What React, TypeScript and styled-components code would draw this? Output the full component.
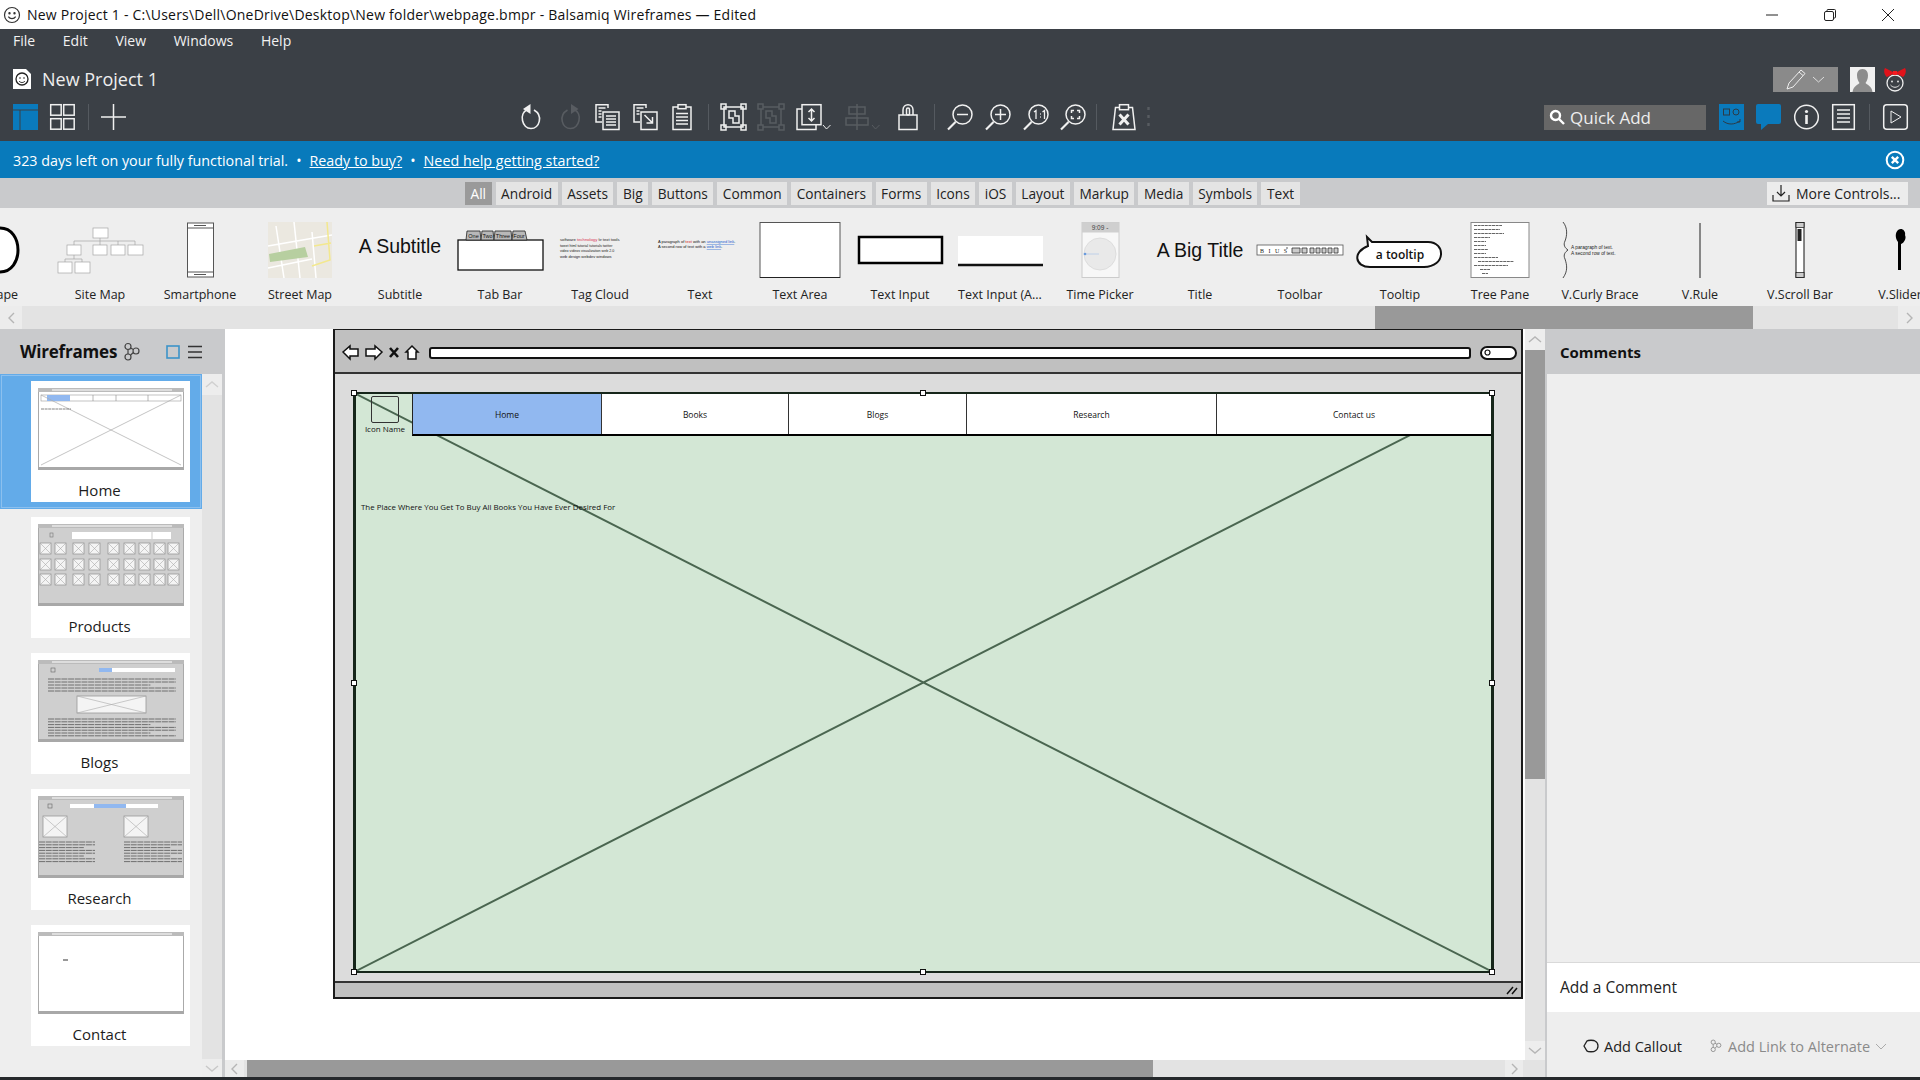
import React from 'react';
import styled, { createGlobalStyle } from 'styled-components';

const GlobalStyle = createGlobalStyle`
  html, body { margin: 0; padding: 0; width: 1920px; height: 1080px; overflow: hidden; background: #fff; }
  * { box-sizing: border-box; }
  body { font-family: "Open Sans", "Noto Sans", sans-serif; color: #1c1c1c; }
`;

const Page = styled.div`
  width: 1920px;
  height: 1080px;
  display: flex;
  flex-direction: column;
  overflow: hidden;
`;

const TitleBar = styled.div`
  height: 29px;
  display: flex;
  align-items: center;
  padding-left: 3px;
  font-size: 14px;
  color: #111;
  background: #fff;
`;
const TitleText = styled.span`
  margin-left: 6px;
  letter-spacing: 0.22px;
`;
const WindowButtons = styled.div`
  margin-left: auto;
  display: flex;
  align-items: center;
`;
const WinButton = styled.svg`
  width: 14px;
  height: 14px;
  margin-right: 44px;
  &:last-child { margin-right: 25px; }
`;

const Header = styled.div`
  height: 112px;
  background: #3b4046;
  color: #fff;
  display: flex;
  flex-direction: column;
`;
const MenuRow = styled.div`
  height: 24px;
  display: flex;
  align-items: center;
  padding: 0 0 2px 13px;
  gap: 27.7px;
  font-size: 14px;
  color: #f2f2f2;
`;
const ProjectRow = styled.div`
  height: 51px;
  display: flex;
  align-items: center;
  padding: 1px 13px 0;
`;
const ProjectName = styled.span`
  margin-left: 11px;
  font-size: 18px;
  color: #eee;
`;
const ModeButton = styled.div`
  width: 65px;
  height: 25px;
  margin-left: auto;
  background: #8a8a8a;
  display: flex;
  align-items: center;
  justify-content: center;
  gap: 6px;
`;
const ToolRow = styled.div`
  height: 26px;
  display: flex;
  align-items: center;
  padding-left: 13px;
`;
const Tool = styled.svg<{ $ml: number; $w: number; $dim?: boolean }>`
  flex: none;
  width: ${({ $w }) => $w}px;
  height: 26px;
  margin-left: ${({ $ml }) => $ml}px;
  fill: none;
  stroke: ${({ $dim }) => ($dim ? '#585c61' : '#f0f0f0')};
  stroke-width: 1.5;
  overflow: visible;
`;
const Divider = styled.div<{ $ml: number }>`
  flex: none;
  width: 1px;
  height: 26px;
  margin-left: ${({ $ml }) => $ml}px;
  background: #555a60;
`;
const QuickAdd = styled.div`
  flex: none;
  width: 162px;
  height: 25px;
  margin-left: 394px;
  padding-left: 5px;
  display: flex;
  align-items: center;
  gap: 5px;
  background: #676767;
  font-size: 17px;
  color: #eee;
`;

const Banner = styled.div`
  height: 37px;
  display: flex;
  align-items: center;
  padding: 1px 15px 0 13px;
  background: #087abb;
  color: #fff;
  font-size: 14.3px;
`;
const BannerLink = styled.a`
  color: #fff;
  text-decoration: underline;
`;
const Dot = styled.span`
  margin: 0 8px;
`;
const BannerClose = styled.svg`
  margin-left: auto;
  width: 20px;
  height: 20px;
`;

const FilterBar = styled.div`
  height: 30px;
  display: flex;
  align-items: center;
  padding-left: 465px;
  gap: 4px;
  background: #c9cacc;
`;
const FilterTab = styled.div<{ $active?: boolean }>`
  height: 23px;
  padding: 0 5.5px;
  display: flex;
  align-items: center;
  font-size: 13.7px;
  background: ${({ $active }) => ($active ? '#9a9a9a' : '#e4e4e4')};
  color: ${({ $active }) => ($active ? '#fff' : '#222')};
`;
const MoreControls = styled(FilterTab)`
  width: 141px;
  margin-left: auto;
  margin-right: 12px;
  padding: 0 5px;
  gap: 6px;
  font-size: 14px;
  background: #ececec;
`;

const Library = styled.div`
  height: 98px;
  display: flex;
  margin-left: -50px;
  background: #eeeeee;
  overflow: hidden;
`;
const LibraryItem = styled.div`
  flex: none;
  width: 100px;
  padding-top: 14px;
  display: flex;
  flex-direction: column;
  align-items: center;
  overflow: hidden;
`;
const Preview = styled.div`
  width: 100px;
  height: 56px;
  display: flex;
  align-items: center;
  justify-content: center;
`;
const PreviewSvg = styled.svg`
  width: 100px;
  height: 56px;
  display: block;
`;
const BigText = styled.span<{ $lift: number }>`
  font-family: "Liberation Sans", Arial, sans-serif;
  font-size: 19.5px;
  color: #111;
  white-space: nowrap;
  margin-bottom: ${({ $lift }) => $lift}px;
`;
const LibraryLabel = styled.div`
  margin-top: 8px;
  font-size: 12.5px;
  line-height: 18px;
  color: #222;
  white-space: nowrap;
`;

const HScroll = styled.div<{ $height: number }>`
  flex: none;
  height: ${({ $height }) => $height}px;
  display: flex;
  align-items: stretch;
  background: #e3e3e3;
`;
const ScrollButton = styled.div<{ $size: number; $plain?: boolean }>`
  flex: none;
  width: ${({ $size }) => $size}px;
  display: flex;
  align-items: center;
  justify-content: center;
  background: ${({ $plain }) => ($plain ? '#e3e3e3' : '#ececec')};
`;
const ScrollThumb = styled.div<{ $ml: number; $w: number }>`
  flex: none;
  width: ${({ $w }) => $w}px;
  margin-left: ${({ $ml }) => $ml}px;
  background: #999999;
`;

const Main = styled.div`
  flex: 1;
  min-height: 0;
  display: flex;
  border-bottom: 3px solid #26292c;
`;

const Sidebar = styled.div`
  flex: none;
  width: 225px;
  display: flex;
  flex-direction: column;
`;
const SidebarHead = styled.div`
  height: 45px;
  flex: none;
  display: flex;
  align-items: center;
  padding-left: 20px;
  background: #c9cacc;
`;
const SidebarTitle = styled.span`
  font-size: 17px;
  font-weight: 700;
  color: #111;
  letter-spacing: -0.2px;
`;
const HeadIcon = styled.span<{ $ml: number }>`
  display: flex;
  margin-left: ${({ $ml }) => $ml}px;
`;
const SidebarBody = styled.div`
  flex: 1;
  min-height: 0;
  display: flex;
  border-right: 3px solid #c9cacc;
`;
const ThumbList = styled.div`
  flex: none;
  width: 202px;
  background: #eeeeee;
  display: flex;
  flex-direction: column;
  gap: 15px;
`;
const ThumbSlot = styled.div<{ $selected?: boolean }>`
  padding: ${({ $selected }) => ($selected ? '7px 0' : '0')};
  margin-bottom: ${({ $selected }) => ($selected ? '-7px' : '0')};
  background: ${({ $selected }) => ($selected ? '#63abe9' : 'transparent')};
  outline: ${({ $selected }) => ($selected ? '1px solid #8cc0ee' : 'none')};
  outline-offset: -2px;
  display: flex;
`;
const ThumbCard = styled.div`
  width: 159px;
  height: 121px;
  margin-left: 31px;
  padding: 7px 7px 0;
  background: #fff;
  display: flex;
  flex-direction: column;
  align-items: center;
`;
const ThumbSvg = styled.svg`
  width: 146px;
  height: 82px;
  flex: none;
  display: block;
`;
const ThumbLabel = styled.div`
  margin: 10px 22px 0 0;
  font-size: 15px;
  line-height: 20px;
  color: #1c1c1c;
`;
const VScroll = styled.div<{ $w: number }>`
  flex: none;
  width: ${({ $w }) => $w}px;
  display: flex;
  flex-direction: column;
  background: #e3e3e3;
`;
const VScrollButton = styled.div<{ $h: number }>`
  flex: none;
  height: ${({ $h }) => $h}px;
  display: flex;
  align-items: center;
  justify-content: center;
  background: #ededed;
`;
const VScrollThumb = styled.div<{ $h: number }>`
  flex: none;
  height: ${({ $h }) => $h}px;
  background: #999999;
`;
const Spring = styled.div`
  flex: 1;
`;

const CanvasArea = styled.div`
  flex: 1;
  min-width: 0;
  display: flex;
  flex-direction: column;
`;
const CanvasRow = styled.div`
  flex: 1;
  min-height: 0;
  display: flex;
`;
const Stage = styled.div`
  flex: 1;
  min-width: 0;
  padding: 0 0 0 108px;
  background: #fff;
`;

const WireWindow = styled.div`
  width: 1190px;
  height: 670px;
  display: flex;
  flex-direction: column;
  border: 2px solid #1a1a1a;
  border-top-width: 1px;
  background: #dcdcdc;
`;
const WireBar = styled.div`
  flex: none;
  height: 44px;
  display: flex;
  align-items: center;
  padding: 3px 0 0 7px;
  background: #c0c0c0;
  border-bottom: 2px solid #333;
`;
const WireAddress = styled.div`
  width: 1042px;
  height: 12px;
  background: #fff;
  border: 2px solid #111;
  border-radius: 3px;
`;
const WireSearch = styled.div`
  width: 37px;
  height: 14px;
  margin-left: 9px;
  background: #fff;
  border: 2px solid #111;
  border-radius: 7px;
  display: flex;
  align-items: center;
  padding-left: 2px;
`;
const WireBody = styled.div`
  flex: 1;
  min-height: 0;
  padding: 18px 27px 0 18px;
`;
const WireStatus = styled.div`
  flex: none;
  height: 16px;
  display: flex;
  justify-content: flex-end;
  align-items: center;
  padding-right: 3px;
  background: #c0c0c0;
  border-top: 2px solid #333;
`;
const Selection = styled.div`
  position: relative;
  height: 581px;
  background: #d3e7d5;
  border: 2px solid #16261a;
  border-left-width: 3px;
  border-right-width: 3px;
`;
const CrossLines = styled.svg`
  position: absolute;
  inset: 0;
  width: 100%;
  height: 100%;
`;
const WireContent = styled.div`
  position: relative;
  display: flex;
  flex-direction: column;
`;
const WireTop = styled.div`
  display: flex;
  height: 42px;
`;
const WireLogo = styled.div`
  flex: none;
  width: 56px;
  display: flex;
  flex-direction: column;
  align-items: center;
  padding: 2px 0 0 2px;
`;
const LogoBox = styled.div`
  width: 28px;
  height: 27px;
  border: 1.5px solid #333;
  border-radius: 2px;
`;
const LogoName = styled.div`
  font-size: 8px;
  line-height: 12px;
  color: #111;
  white-space: nowrap;
`;
const WireNav = styled.div`
  flex: 1;
  display: flex;
  background: #fff;
  border-left: 1.5px solid #222;
  border-bottom: 2px solid #000;
`;
const WireNavItem = styled.div<{ $w: number; $active?: boolean }>`
  flex: none;
  width: ${({ $w }) => $w}px;
  display: flex;
  align-items: center;
  justify-content: center;
  font-size: 8.5px;
  color: #111;
  background: ${({ $active }) => ($active ? '#91b8f0' : 'transparent')};
  border-right: 1.5px solid #333;
  &:last-child { border-right: none; flex: 1; }
`;
const WireHeadline = styled.div`
  margin: 65px 0 0 5px;
  font-size: 7.9px;
  line-height: 12px;
  color: #111;
  white-space: nowrap;
`;
const HandleLayer = styled.div`
  position: absolute;
  inset: -1px -1px -1px -2px;
`;
const Handle = styled.div<{ $x: string; $y: string }>`
  position: absolute;
  left: ${({ $x }) => $x};
  top: ${({ $y }) => $y};
  width: 6px;
  height: 6px;
  margin: -3px 0 0 -3px;
  background: #fff;
  border: 1px solid #111;
`;

const Comments = styled.div`
  flex: none;
  width: 375px;
  display: flex;
  flex-direction: column;
  border-left: 2px solid #c9cacc;
  background: #eeeeee;
`;
const CommentsHead = styled.div`
  height: 45px;
  flex: none;
  display: flex;
  align-items: center;
  padding-left: 13px;
  background: #c9cacc;
  font-size: 15px;
  font-weight: 700;
  color: #111;
`;
const CommentsBody = styled.div`
  flex: 1;
`;
const CommentInput = styled.div`
  flex: none;
  height: 50px;
  display: flex;
  align-items: center;
  padding: 0 0 2px 13px;
  background: #fff;
  border-top: 1px solid #d9d9d9;
  font-size: 15.5px;
  color: #222;
`;
const CommentActions = styled.div`
  flex: none;
  height: 65px;
  display: flex;
  align-items: center;
  padding: 3px 0 0 36px;
  font-size: 14.5px;
`;
const CommentAction = styled.div<{ $mute?: boolean; $ml?: number }>`
  display: flex;
  align-items: center;
  gap: 5px;
  margin-left: ${({ $ml }) => $ml ?? 0}px;
  color: ${({ $mute }) => ($mute ? '#8a8a8a' : '#222')};
`;

const MiniChevron = ({ dir, color = '#b5b5b5' }: { dir: 'l' | 'r' | 'u' | 'd'; color?: string }) => {
  const d = { l: 'M7 1 2 6l5 5', r: 'M2 1l5 5-5 5', u: 'M1 7l6-5 6 5', d: 'M1 2l6 5 6-5' }[dir];
  const horizontal = dir === 'l' || dir === 'r';
  return (
    <svg width={horizontal ? 9 : 14} height={horizontal ? 12 : 9} fill="none" stroke={color} strokeWidth="1.4">
      <path d={d} />
    </svg>
  );
};

const Smiley = ({ size = 18, stroke = '#333' }: { size?: number; stroke?: string }) => (
  <svg width={size} height={size} viewBox="0 0 18 18" fill="none" stroke={stroke} strokeWidth="1.2">
    <circle cx="9" cy="9" r="7.5" />
    <circle cx="6.5" cy="7.2" r=".6" fill={stroke} />
    <circle cx="11.5" cy="7.2" r=".6" fill={stroke} />
    <path d="M5.3 10.6c1.8 2.6 5.6 2.6 7.4 0" />
  </svg>
);

const LinkGlyph = ({ color = '#555', size = 20 }: { color?: string; size?: number }) => (
  <svg width={size} height={size} viewBox="0 0 20 20" fill="none" stroke={color} strokeWidth="1.2">
    <circle cx="6" cy="4.5" r="3" />
    <circle cx="14" cy="9" r="3" />
    <circle cx="6" cy="15" r="3" />
    <path d="M6 7.5v4.5M8.6 6l2.8 1.6M11.4 10.5 8.6 13" />
  </svg>
);

type ToolDef = { key: string; ml: number; w?: number; dim?: boolean; body?: React.ReactNode };

// w left out means a thin divider
const tools: ToolDef[] = [
  { key: 'panels', ml: 0, w: 25, body: <><rect x="0" y="0" width="25" height="26" fill="#0a7abc" stroke="none" /><path d="M0 6h25M7 6v20" stroke="#3b4046" strokeWidth="1" /></> },
  { key: 'grid', ml: 12, w: 25, body: <><rect x=".7" y=".7" width="10.5" height="10.5" /><rect x="13.7" y=".7" width="10.5" height="10.5" /><rect x=".7" y="14.7" width="10.5" height="10.5" /><rect x="13.7" y="14.7" width="10.5" height="10.5" /></> },
  { key: 'sep1', ml: 13 },
  { key: 'plus', ml: 12, w: 25, body: <path d="M12.5 0v26M0 13h25" /> },
  { key: 'undo', ml: 395, w: 20, body: <><path d="M6.5 5.5c-9 4-5.5 19 3.5 19 8.5 0 12.500-13 3-18.500" strokeWidth="1.6" /><path d="M9.500 0v10L2 5z" fill="#f0f0f0" stroke="none" /></> },
  { key: 'redo', ml: 19, w: 20, dim: true, body: <><path d="M14 5.500c9 4 5.500 19-3.500 19C2 24.500-2 11.500 7.500 6" strokeWidth="1.600" /><path d="M11 0v10l7.500-5z" fill="#585c61" stroke="none" /></> },
  { key: 'copy', ml: 15, w: 25, body: <><path d="M13 4V.7H1V18h6" /><rect x="8" y="8" width="16" height="17.500" /><path d="M3.500 4h7M3.500 7h3M3.500 10h3M3.500 13h3M11 12h10M11 15h10M11 18h10M11 21h10" /></> },
  { key: 'copy2', ml: 13, w: 25, body: <><path d="M13 4V.7H1V18h6" /><rect x="8" y="8" width="16" height="17.500" /><path d="M3.500 4h7M3.500 7h3M3.500 10h3M11.500 11l8 8M19.500 13v6h-6" /></> },
  { key: 'paste', ml: 14, w: 20, body: <><path d="M6 3H1v22.500h18V3h-5" /><rect x="6" y=".7" width="8" height="4" /><path d="M4 9.500h12M4 13h12M4 16.500h12M4 20h12" /></> },
  { key: 'sep2', ml: 16 },
  { key: 'group', ml: 12, w: 25, body: <><rect x="3" y="3" width="19" height="20" /><path d="M0 0h5v5H0zM20 0h5v5h-5zM0 21h5v5H0zM20 21h5v5h-5zM8 7h6v5h4v7h-6v-5H8z" /></> },
  { key: 'ungroup', ml: 12, w: 26, dim: true, body: <path d="M0 0h5v5H0zM21 0h5v5h-5zM0 21h5v5H0zM21 21h5v5h-5zM8 7h6v5h4v7h-6v-5H8zM5 3h16M3 5v16M5 23h16M23 5v16" /> },
  { key: 'layer', ml: 12, w: 36, body: <><rect x="6" y=".7" width="19" height="20" /><path d="M6 5H1v20.500h19V21M15.500 5v12M12.500 8l3-3 3 3M12.500 14l3 3 3-3" /><path d="M27 21l3.500 4 4-4" strokeWidth="1" /></> },
  { key: 'align', ml: 14, w: 34, dim: true, body: <><path d="M11 0v26" /><rect x="3" y="3" width="16" height="7" /><rect x="0" y="14" width="22" height="7" /><path d="M26 21l3.500 4 4-4" strokeWidth="1" /></> },
  { key: 'lock', ml: 18, w: 20, body: <><path d="M5 11V6c0-7 10-7 10 0v5" /><path d="M1 11h18v14.500H1z" /><rect x="8.500" y="4" width="3" height="7" rx="1.500" /></> },
  { key: 'sep3', ml: 16 },
  { key: 'zoomout', ml: 12, w: 26, body: <><circle cx="15.500" cy="10.500" r="9.500" /><path d="M8.500 18 1 25.500" strokeWidth="2.200" /><path d="M10 10.500h11" /></> },
  { key: 'zoomin', ml: 11, w: 27, body: <><circle cx="16.500" cy="10.500" r="9.500" /><path d="M9.500 18 2 25.500" strokeWidth="2.200" /><path d="M11 10.500h11M16.500 5v11" /></> },
  { key: 'zoom11', ml: 11, w: 27, body: <><circle cx="16.500" cy="10.500" r="9.500" /><path d="M9.500 18 2 25.500" strokeWidth="2.200" /><path d="M12 8l2-1.500V15M18 10h.8M18 13h.8M20.500 8l2-1.500V15" strokeWidth="1.300" /></> },
  { key: 'zoomfit', ml: 9, w: 28, body: <><circle cx="17.500" cy="10.500" r="9.500" /><path d="M10.500 18 3 25.500" strokeWidth="2.200" /><path d="M13.500 9V6.500H16M19 6.500h2.500V9M21.500 12v2.500H19M16 14.500h-2.500V12" /></> },
  { key: 'sep4', ml: 10 },
  { key: 'clear', ml: 15, w: 24, body: <><path d="M7 3.500H3.500L1 25.500h22L20.500 3.500H17" /><rect x="7.500" y=".7" width="9" height="5" /><path d="M7.500 10.500l9 10M16.500 10.500l-9 10" strokeWidth="3" /></> },
  { key: 'dots', ml: 11, w: 3, dim: true, body: <path d="M1.500 3v3M1.500 11v3M1.500 19v3" strokeWidth="2.400" /> },
];

const filters = ['All', 'Android', 'Assets', 'Big', 'Buttons', 'Common', 'Containers', 'Forms', 'Icons', 'iOS', 'Layout', 'Markup', 'Media', 'Symbols', 'Text'];

const previews: { label: string; node: React.ReactNode }[] = [
  { label: 'Shape', node: <PreviewSvg viewBox="0 0 100 56"><path d="M50 6c24 0 24 44 0 44" fill="#fff" stroke="#000" strokeWidth="3" /></PreviewSvg> },
  { label: 'Site Map', node: <PreviewSvg viewBox="0 0 100 56" fill="#fff" stroke="#a5a5a5" strokeWidth=".7"><path d="M50 16v3M24 19h61M24 19v4M50 19v4M68 19v4M85 19v4M24 33v4M15 37h17M15 37v3M32 37v3" fill="none" /><rect x="43" y="6" width="15" height="10" /><rect x="17" y="23" width="14" height="10" /><rect x="43" y="23" width="14" height="10" /><rect x="61" y="23" width="14" height="10" /><rect x="78" y="23" width="15" height="10" /><rect x="8" y="40" width="14" height="11" /><rect x="25" y="40" width="15" height="11" /></PreviewSvg> },
  { label: 'Smartphone', node: <PreviewSvg viewBox="0 0 100 56"><rect x="37.500" y="1" width="26" height="54" fill="#fff" stroke="#555" strokeWidth="1" /><path d="M37.500 6h26M37.500 50h26" stroke="#555" strokeWidth="1" /><path d="M44 3.500h12M44 52.500h12" stroke="#555" strokeWidth="1" /></PreviewSvg> },
  { label: 'Street Map', node: <PreviewSvg viewBox="0 0 100 56"><rect x="18" y="0" width="64" height="56" fill="#ebe8e0" /><path d="M18 24l46-8 18-3M18 46l44-9M26 4l8 52M44 0l6 56M62 10l4 46" stroke="#fff" strokeWidth="1.500" fill="none" /><path d="M19 32l36-7 3 10-38 5z" fill="#b7cfa0" /><path d="M77 0l3 38-18 6M64 24l17-3" stroke="#f3e88e" strokeWidth="1.500" fill="none" /></PreviewSvg> },
  { label: 'Subtitle', node: <BigText $lift={7}>A Subtitle</BigText> },
  { label: 'Tab Bar', node: <PreviewSvg viewBox="0 0 100 56"><rect x="8" y="18" width="85" height="30" fill="#fff" stroke="#111" strokeWidth="1.300" /><g fill="#b8b8b8" stroke="#222" strokeWidth=".8"><path d="M16 18l1-9h13l1 9z" /><path d="M31 18l1-9h11l1 9z" /><path d="M44 18l1-9h16l1 9z" /><path d="M62 18l1-9h12l2 9z" /></g><g fontSize="5.500" fill="#111" textAnchor="middle" fontFamily="Liberation Sans"><text x="23.500" y="16">One</text><text x="37.500" y="16">Two</text><text x="53" y="16">Three</text><text x="69" y="16">Four</text></g></PreviewSvg> },
  { label: 'Tag Cloud', node: <PreviewSvg viewBox="0 0 100 56" fontFamily="Liberation Sans" fill="#222"><text x="10" y="19" fontSize="4.200">software <tspan fill="#d8304f">technology</tspan> <tspan fontSize="2.800">for</tspan> text tools</text><text x="10" y="24.500" fontSize="3.600">tweet html tutorial tutorials twitter</text><text x="10" y="30" fontSize="3.600">video videos visualization web 2.0</text><text x="10" y="35.500" fontSize="4">web design webdev windows</text></PreviewSvg> },
  { label: 'Text', node: <PreviewSvg viewBox="0 0 100 56" fontFamily="Liberation Sans" fill="#111" fontSize="4"><text x="8" y="21">A paragraph of <tspan fill="#d02020">text</tspan> with an <tspan fill="#2060d0" textDecoration="underline">unassigned link</tspan>.</text><text x="8" y="26">A second row of text with a <tspan fill="#2060d0" textDecoration="underline">web link</tspan>.</text></PreviewSvg> },
  { label: 'Text Area', node: <PreviewSvg viewBox="0 0 100 56"><rect x="10" y=".5" width="80" height="55" fill="#fff" stroke="#555" strokeWidth="1" /><path d="M10 55.500h80" stroke="#222" strokeWidth="1.200" /></PreviewSvg> },
  { label: 'Text Input', node: <PreviewSvg viewBox="0 0 100 56"><rect x="9" y="15" width="83" height="26" fill="#fff" stroke="#000" strokeWidth="2.500" /></PreviewSvg> },
  { label: 'Text Input (A...', node: <PreviewSvg viewBox="0 0 100 56"><rect x="8" y="14" width="85" height="29" fill="#fff" /><path d="M8 43h85" stroke="#111" strokeWidth="2.400" /></PreviewSvg> },
  { label: 'Time Picker', node: <PreviewSvg viewBox="0 0 100 56" fontFamily="Liberation Sans"><rect x="32" y=".5" width="37" height="55" fill="#f7f7f7" stroke="#ccc" /><rect x="32" y=".5" width="37" height="10" fill="#cfcfcf" /><text x="50" y="8" fontSize="6.500" textAnchor="middle" fill="#444">9:09 -</text><circle cx="50" cy="32" r="16" fill="#e9e9e9" stroke="#ddd" /><path d="M35 32h14" stroke="#bfd0e8" /><circle cx="35" cy="32" r="1.300" fill="#6a9bdc" /></PreviewSvg> },
  { label: 'Title', node: <BigText $lift={0}>A Big Title</BigText> },
  { label: 'Toolbar', node: <PreviewSvg viewBox="0 0 100 56" fontFamily="Liberation Serif"><rect x="7" y="23" width="86" height="10" fill="#fff" stroke="#555" strokeWidth=".8" /><text x="10" y="30.500" fontSize="6" fill="#222" letterSpacing="1.500">B I U S</text><path d="M36 26h2M42 26h8v5h-8zM52 26h5v5h-5zM60 26h4v5h-4zM66 26h4v5h-4zM72 26h4v5h-4zM78 26h4v5h-4zM84 26h4v5h-4z" stroke="#333" strokeWidth=".8" fill="#ccc" /></PreviewSvg> },
  { label: 'Tooltip', node: <PreviewSvg viewBox="0 0 100 56" fontFamily="Open Sans"><path d="M17 15l5 5h56c18 0 18 25-4 25H20C5 45 2 30 18 24z" fill="#fff" stroke="#111" strokeWidth="2" /><text x="50" y="37" fontSize="12" textAnchor="middle" fill="#111" fontWeight="600">a tooltip</text></PreviewSvg> },
  { label: 'Tree Pane', node: <PreviewSvg viewBox="0 0 100 56" fontFamily="Liberation Sans"><rect x="21" y=".5" width="58" height="55" fill="#fff" stroke="#888" /><g stroke="#666" strokeWidth="1.200"><path d="M24 3.500h28M24 7.500h26M24 11.500h30M24 15.500h16M24 19.500h12M24 23.500h12M24 27.500h14M24 31.500h12M24 35.500h24M28 39.500h36M24 43.500h34M30 47.500h10M32 51.500h6" strokeDasharray="3 .6" /></g></PreviewSvg> },
  { label: 'V.Curly Brace', node: <PreviewSvg viewBox="0 0 100 56" fontFamily="Liberation Sans" fill="#222"><path d="M13 0c5 6 4 14 2 19-2 4 0 7 3 9-3 2-5 5-3 9 2 6 3 12-2 19" fill="none" stroke="#222" strokeWidth=".8" /><text x="21" y="27" fontSize="4.800">A paragraph of text.</text><text x="21" y="33" fontSize="4.800">A second row of text.</text></PreviewSvg> },
  { label: 'V.Rule', node: <PreviewSvg viewBox="0 0 100 56"><path d="M50 1v55" stroke="#333" strokeWidth="1.100" /></PreviewSvg> },
  { label: 'V.Scroll Bar', node: <PreviewSvg viewBox="0 0 100 56"><rect x="46" y=".5" width="8" height="55" fill="#fff" stroke="#111" strokeWidth="1" /><rect x="46" y=".5" width="8" height="5" fill="#ccc" stroke="#111" strokeWidth=".7" /><rect x="46" y="50.500" width="8" height="5" fill="#ccc" stroke="#111" strokeWidth=".7" /><rect x="47.500" y="7" width="4" height="12" fill="#222" /></PreviewSvg> },
  { label: 'V.Slider', node: <PreviewSvg viewBox="0 0 100 56"><path d="M48 8c4-3 8 1 7 5 2 4-2 9-4 9v26h-3V20c-3-4-3-9 0-12z" fill="#000" /></PreviewSvg> },
];

const ThumbFrame = ({ fill = '#fff' }: { fill?: string }) => (
  <>
    <rect width="146" height="82" fill={fill} />
    <path d="M.5 4v75M145.500 4v75" stroke="#aaa" fill="none" />
    <rect x="0" y="0" width="146" height="4" fill="#bbb" />
    <path d="M14 2h120" stroke="#fff" strokeWidth="1" />
    <rect x="0" y="79" width="146" height="3" fill="#a8a8a8" />
  </>
);

const XBox = ({ x, y, w, h }: { x: number; y: number; w: number; h: number }) => (
  <>
    <rect x={x} y={y} width={w} height={h} fill="#f4f4f4" stroke="#999" strokeWidth=".8" />
    <path d={`M${x} ${y}l${w} ${h}M${x + w} ${y}l${-w} ${h}`} stroke="#aaa" strokeWidth=".6" />
  </>
);

const Lines = ({ x, y, w, rows, step = 2.6 }: { x: number; y: number; w: number; rows: number; step?: number }) => (
  <path
    d={Array.from({ length: rows }, (_, i) => `M${x} ${y + i * step}h${i % 3 === 2 ? w * 0.8 : w}`).join('')}
    stroke="#555"
    strokeWidth=".8"
    strokeDasharray="6 .7"
  />
);

const productRows = [19, 35, 50];
const productCols = [2, 17, 35, 51, 70, 86, 101, 116, 130];

const thumbs: { label: string; selected?: boolean; art: React.ReactNode }[] = [
  {
    label: 'Home',
    selected: true,
    art: (
      <>
        <ThumbFrame />
        <rect x="3" y="7" width="140" height="6" fill="#fff" stroke="#999" strokeWidth=".6" />
        <rect x="9" y="7" width="23" height="6" fill="#91b8f0" />
        <path d="M55 7v6M78 7v6M110 7v6" stroke="#888" strokeWidth=".6" />
        <path d="M3 7l140 70M143 7 3 77" stroke="#aaa" strokeWidth=".7" />
        <path d="M3 21h30" stroke="#666" strokeWidth=".8" strokeDasharray="3 .6" />
      </>
    ),
  },
  {
    label: 'Products',
    art: (
      <>
        <ThumbFrame fill="#cfcfcf" />
        <rect x="34" y="8" width="99" height="7" fill="#fff" />
        <path d="M114 8v7" stroke="#aaa" strokeWidth=".6" />
        <rect x="12" y="9" width="3" height="4" fill="none" stroke="#777" strokeWidth=".6" />
        {productRows.map((y) => productCols.map((x) => <XBox key={`${x}-${y}`} x={x} y={y} w={11} h={11} />))}
      </>
    ),
  },
  {
    label: 'Blogs',
    art: (
      <>
        <ThumbFrame fill="#cfcfcf" />
        <rect x="61" y="8" width="76" height="4" fill="#fff" />
        <rect x="61" y="8" width="13" height="4" fill="#91b8f0" />
        <rect x="13" y="8" width="4" height="4" fill="none" stroke="#666" strokeWidth=".6" />
        <Lines x={10} y={19} w={128} rows={5} step={3} />
        <XBox x={39} y={36} w={69} h={17} />
        <Lines x={10} y={59} w={128} rows={7} step={2.800} />
      </>
    ),
  },
  {
    label: 'Research',
    art: (
      <>
        <ThumbFrame fill="#cfcfcf" />
        <rect x="32" y="8" width="88" height="4" fill="#fff" />
        <rect x="56" y="8" width="32" height="4" fill="#91b8f0" />
        <rect x="10" y="8" width="4" height="4" fill="none" stroke="#666" strokeWidth=".6" />
        <XBox x={5} y={20} w={24} h={21} />
        <XBox x={86} y={20} w={24} h={21} />
        <Lines x={1} y={46} w={56} rows={8} step={2.800} />
        <Lines x={86} y={46} w={58} rows={8} step={2.800} />
      </>
    ),
  },
  {
    label: 'Contact',
    art: (
      <>
        <ThumbFrame />
        <path d="M25 28h5" stroke="#333" strokeWidth="1" />
      </>
    ),
  },
];

const handleSpots: [string, string][] = [
  ['0%', '0%'],
  ['50%', '0%'],
  ['100%', '0%'],
  ['0%', '50%'],
  ['100%', '50%'],
  ['0%', '100%'],
  ['50%', '100%'],
  ['100%', '100%'],
];

export default function App() {
  return (
    <Page>
      <GlobalStyle />
      <TitleBar>
        <Smiley />
        <TitleText>New Project 1 - C:\Users\Dell\OneDrive\Desktop\New folder\webpage.bmpr - Balsamiq Wireframes — Edited</TitleText>
        <WindowButtons>
          <WinButton viewBox="0 0 14 14" fill="none" stroke="#222"><path d="M1 7h12" /></WinButton>
          <WinButton viewBox="0 0 14 14" fill="none" stroke="#222"><rect x="1.500" y="3.500" width="9" height="9" rx="1.500" /><path d="M4 3.500V2.500a1 1 0 0 1 1-1h6.500a1 1 0 0 1 1 1V9a1 1 0 0 1-1 1h-1" /></WinButton>
          <WinButton viewBox="0 0 14 14" fill="none" stroke="#222"><path d="M1 1l12 12M13 1 1 13" /></WinButton>
        </WindowButtons>
      </TitleBar>

      <Header>
        <MenuRow>
          <span>File</span>
          <span>Edit</span>
          <span>View</span>
          <span>Windows</span>
          <span>Help</span>
        </MenuRow>
        <ProjectRow>
          <svg width="18" height="20" viewBox="0 0 18 20">
            <path d="M0 0h13l5 5v15H0z" fill="#fff" />
            <circle cx="9" cy="10" r="6" fill="#fff" stroke="#222" strokeWidth="1.300" />
            <circle cx="7" cy="9" r=".8" fill="#222" />
            <circle cx="11" cy="9" r=".8" fill="#222" />
            <path d="M6 12c1.500 2 4.500 2 6 0" stroke="#222" fill="none" />
          </svg>
          <ProjectName>New Project 1</ProjectName>
          <ModeButton>
            <svg width="20" height="22" viewBox="0 0 20 22" fill="none" stroke="#eee" strokeWidth="1">
              <path d="M1 21l2-6L15 2l4 3.500L7 19z" />
              <path d="M13 4l4 3.500" />
            </svg>
            <svg width="13" height="7" fill="none" stroke="#ddd"><path d="M1 1l5.500 5L12 1" /></svg>
          </ModeButton>
          <HeadIcon $ml={12}>
            <svg width="25" height="25" viewBox="0 0 25 25">
              <rect width="25" height="25" fill="#f0f0f0" />
              <path d="M12.500 2c4 0 5.500 3 5.500 6.500s-1.500 6-2.500 7.500c1 1.500 6 2.500 7 9H2.500c1-6.500 6-7.500 7-9C8.500 14.500 7 12 7 8.500S8.500 2 12.500 2z" fill="#8d8d8d" />
            </svg>
          </HeadIcon>
          <HeadIcon $ml={8}>
            <svg width="24" height="25" viewBox="0 0 24 25">
              <circle cx="12" cy="16" r="8" fill="none" stroke="#eee" strokeWidth="1.300" />
              <circle cx="9" cy="14.500" r=".9" fill="#eee" />
              <circle cx="15" cy="14.500" r=".9" fill="#eee" />
              <path d="M7.500 18c2.500 3 6.500 3 9 0" fill="none" stroke="#eee" />
              <path d="M12 6 2 1c-2 3 0 8 2 9zM12 6l10-5c2 3 0 8-2 9z" fill="#e0121a" />
              <rect x="10" y="4" width="4" height="4" fill="#f21c22" />
            </svg>
          </HeadIcon>
        </ProjectRow>
        <ToolRow>
          {tools.map((tool) =>
            tool.w === undefined ? (
              <Divider key={tool.key} $ml={tool.ml} />
            ) : (
              <Tool key={tool.key} $ml={tool.ml} $w={tool.w} $dim={tool.dim} viewBox={`0 0 ${tool.w} 26`}>
                {tool.body}
              </Tool>
            ),
          )}
          <QuickAdd>
            <svg width="16" height="16" viewBox="0 0 16 16" fill="none" stroke="#fff" strokeWidth="2.400">
              <circle cx="6.500" cy="6.500" r="4.500" />
              <path d="M10 10l5 5" />
            </svg>
            Quick Add
          </QuickAdd>
          <Tool $ml={13} $w={25} viewBox="0 0 25 26">
            <rect width="25" height="26" fill="#0a7abc" stroke="none" />
            <g stroke="#2c3b47" strokeWidth="1">
              <rect x="4.500" y="5" width="6" height="6" />
              <circle cx="17" cy="8" r="3" />
              <path d="M4 17c5 4 11 4 17 0M21 15v3h-3" />
            </g>
          </Tool>
          <Tool $ml={12} $w={25} viewBox="0 0 25 26">
            <path d="M2 0h21a2 2 0 0 1 2 2v16a2 2 0 0 1-2 2H12l-7 6v-6H2a2 2 0 0 1-2-2V2a2 2 0 0 1 2-2z" fill="#0a7abc" stroke="none" />
          </Tool>
          <Tool $ml={13} $w={25} viewBox="0 0 25 26">
            <circle cx="12.500" cy="13" r="11.800" />
            <path d="M12.500 11v9" strokeWidth="2.600" />
            <circle cx="12.500" cy="7.500" r="1.600" fill="#f0f0f0" stroke="none" />
          </Tool>
          <Tool $ml={13} $w={23} viewBox="0 0 23 26">
            <rect x=".7" y=".7" width="21.600" height="24.600" />
            <path d="M5 6h13M5 10h13M5 14h13M5 18h13" />
          </Tool>
          <Divider $ml={14} />
          <Tool $ml={13} $w={25} viewBox="0 0 25 26">
            <rect x=".7" y=".7" width="23.600" height="24.600" rx="3" />
            <path d="M8 7v12l10-6z" strokeWidth="1" />
          </Tool>
        </ToolRow>
      </Header>

      <Banner>
        323 days left on your fully functional trial.
        <Dot>•</Dot>
        <BannerLink>Ready to buy?</BannerLink>
        <Dot>•</Dot>
        <BannerLink>Need help getting started?</BannerLink>
        <BannerClose viewBox="0 0 20 20" fill="none" stroke="#fff">
          <circle cx="10" cy="10" r="8.300" strokeWidth="2" />
          <path d="M6.800 6.800l6.400 6.400M13.200 6.800l-6.400 6.400" strokeWidth="2.400" />
        </BannerClose>
      </Banner>

      <FilterBar>
        {filters.map((filter) => (
          <FilterTab key={filter} $active={filter === 'All'}>
            {filter}
          </FilterTab>
        ))}
        <MoreControls>
          <svg width="18" height="18" viewBox="0 0 18 18" fill="none" stroke="#222" strokeWidth="1.200">
            <path d="M9 1v11M5 8l4 4 4-4M1 11v6h16v-6" />
          </svg>
          More Controls...
        </MoreControls>
      </FilterBar>

      <Library>
        {previews.map((item) => (
          <LibraryItem key={item.label}>
            <Preview>{item.node}</Preview>
            <LibraryLabel>{item.label}</LibraryLabel>
          </LibraryItem>
        ))}
      </Library>
      <HScroll $height={23}>
        <ScrollButton $size={22}>
          <MiniChevron dir="l" />
        </ScrollButton>
        <ScrollThumb $ml={1353} $w={378} />
        <Spring />
        <ScrollButton $size={22}>
          <MiniChevron dir="r" />
        </ScrollButton>
      </HScroll>

      <Main>
        <Sidebar>
          <SidebarHead>
            <SidebarTitle>Wireframes</SidebarTitle>
            <HeadIcon $ml={5}>
              <LinkGlyph color="#444" />
            </HeadIcon>
            <HeadIcon $ml={24}>
              <svg width="14" height="14" fill="none" stroke="#3c93c9" strokeWidth="1.600">
                <rect x="1" y="1" width="12" height="12" />
              </svg>
            </HeadIcon>
            <HeadIcon $ml={8}>
              <svg width="14" height="14" fill="none" stroke="#333" strokeWidth="1.300">
                <path d="M0 1.500h14M0 7h14M0 12.500h14" />
              </svg>
            </HeadIcon>
          </SidebarHead>
          <SidebarBody>
            <ThumbList>
              {thumbs.map((thumb) => (
                <ThumbSlot key={thumb.label} $selected={thumb.selected}>
                  <ThumbCard>
                    <ThumbSvg viewBox="0 0 146 82">{thumb.art}</ThumbSvg>
                    <ThumbLabel>{thumb.label}</ThumbLabel>
                  </ThumbCard>
                </ThumbSlot>
              ))}
            </ThumbList>
            <VScroll $w={20}>
              <VScrollButton $h={21}>
                <MiniChevron dir="u" color="#d0d0d0" />
              </VScrollButton>
              <Spring />
              <VScrollButton $h={18}>
                <MiniChevron dir="d" color="#c8c8c8" />
              </VScrollButton>
            </VScroll>
          </SidebarBody>
        </Sidebar>

        <CanvasArea>
          <CanvasRow>
            <Stage>
              <WireWindow>
                <WireBar>
                  <svg width="87" height="18" viewBox="0 0 87 18" fill="#fff" stroke="#111" strokeWidth="1.500">
                    <path d="M1 8l7-6v3h8v7H8v3z" />
                    <path d="M40 8l-7-6v3h-9v7h9v3z" />
                    <path d="M48 4l8 9M56 4l-8 9" strokeWidth="2.600" />
                    <path d="M64 8l6-6 6 6h-2v7h-8V8z" />
                  </svg>
                  <WireAddress />
                  <WireSearch>
                    <svg width="7" height="7" fill="none" stroke="#111" strokeWidth="1.200">
                      <circle cx="3.500" cy="3.500" r="2.500" />
                    </svg>
                  </WireSearch>
                </WireBar>
                <WireBody>
                  <Selection>
                    <CrossLines viewBox="0 0 100 100" preserveAspectRatio="none">
                      <path d="M0 0 100 100M100 0 0 100" stroke="#4a6650" strokeWidth="2" vectorEffect="non-scaling-stroke" fill="none" />
                    </CrossLines>
                    <WireContent>
                      <WireTop>
                        <WireLogo>
                          <LogoBox />
                          <LogoName>Icon Name</LogoName>
                        </WireLogo>
                        <WireNav>
                          <WireNavItem $w={189} $active>Home</WireNavItem>
                          <WireNavItem $w={187}>Books</WireNavItem>
                          <WireNavItem $w={178}>Blogs</WireNavItem>
                          <WireNavItem $w={250}>Research</WireNavItem>
                          <WireNavItem $w={273}>Contact us</WireNavItem>
                        </WireNav>
                      </WireTop>
                      <WireHeadline>The Place Where You Get To Buy All Books You Have Ever Desired For</WireHeadline>
                    </WireContent>
                    <HandleLayer>
                      {handleSpots.map(([x, y]) => (
                        <Handle key={`${x}${y}`} $x={x} $y={y} />
                      ))}
                    </HandleLayer>
                  </Selection>
                </WireBody>
                <WireStatus>
                  <svg width="12" height="9" fill="none" stroke="#111" strokeWidth="1.500">
                    <path d="M1 8l6-7M6 8l5-6" />
                  </svg>
                </WireStatus>
              </WireWindow>
            </Stage>
            <VScroll $w={20}>
              <VScrollButton $h={21}>
                <MiniChevron dir="u" />
              </VScrollButton>
              <VScrollThumb $h={429} />
              <Spring />
              <VScrollButton $h={19}>
                <MiniChevron dir="d" />
              </VScrollButton>
            </VScroll>
          </CanvasRow>
          <HScroll $height={17}>
            <ScrollButton $size={19}>
              <MiniChevron dir="l" />
            </ScrollButton>
            <ScrollThumb $ml={3} $w={906} />
            <Spring />
            <ScrollButton $size={18}>
              <MiniChevron dir="r" />
            </ScrollButton>
            <ScrollButton $size={22} $plain />
          </HScroll>
        </CanvasArea>

        <Comments>
          <CommentsHead>Comments</CommentsHead>
          <CommentsBody />
          <CommentInput>Add a Comment</CommentInput>
          <CommentActions>
            <CommentAction>
              <svg width="16" height="14" viewBox="0 0 16 14" fill="none" stroke="#222" strokeWidth="1.300">
                <path d="M1 7l3-5c1-1 7-1 8 0 2 1 3 3 3 5s-1 4-3 5c-1 1-7 1-8 0z" />
              </svg>
              Add Callout
            </CommentAction>
            <CommentAction $mute $ml={27}>
              <LinkGlyph color="#888" size={14} />
              Add Link to Alternate
              <svg width="12" height="7" fill="none" stroke="#aaa">
                <path d="M1 1l5 5 5-5" />
              </svg>
            </CommentAction>
          </CommentActions>
        </Comments>
      </Main>
    </Page>
  );
}
